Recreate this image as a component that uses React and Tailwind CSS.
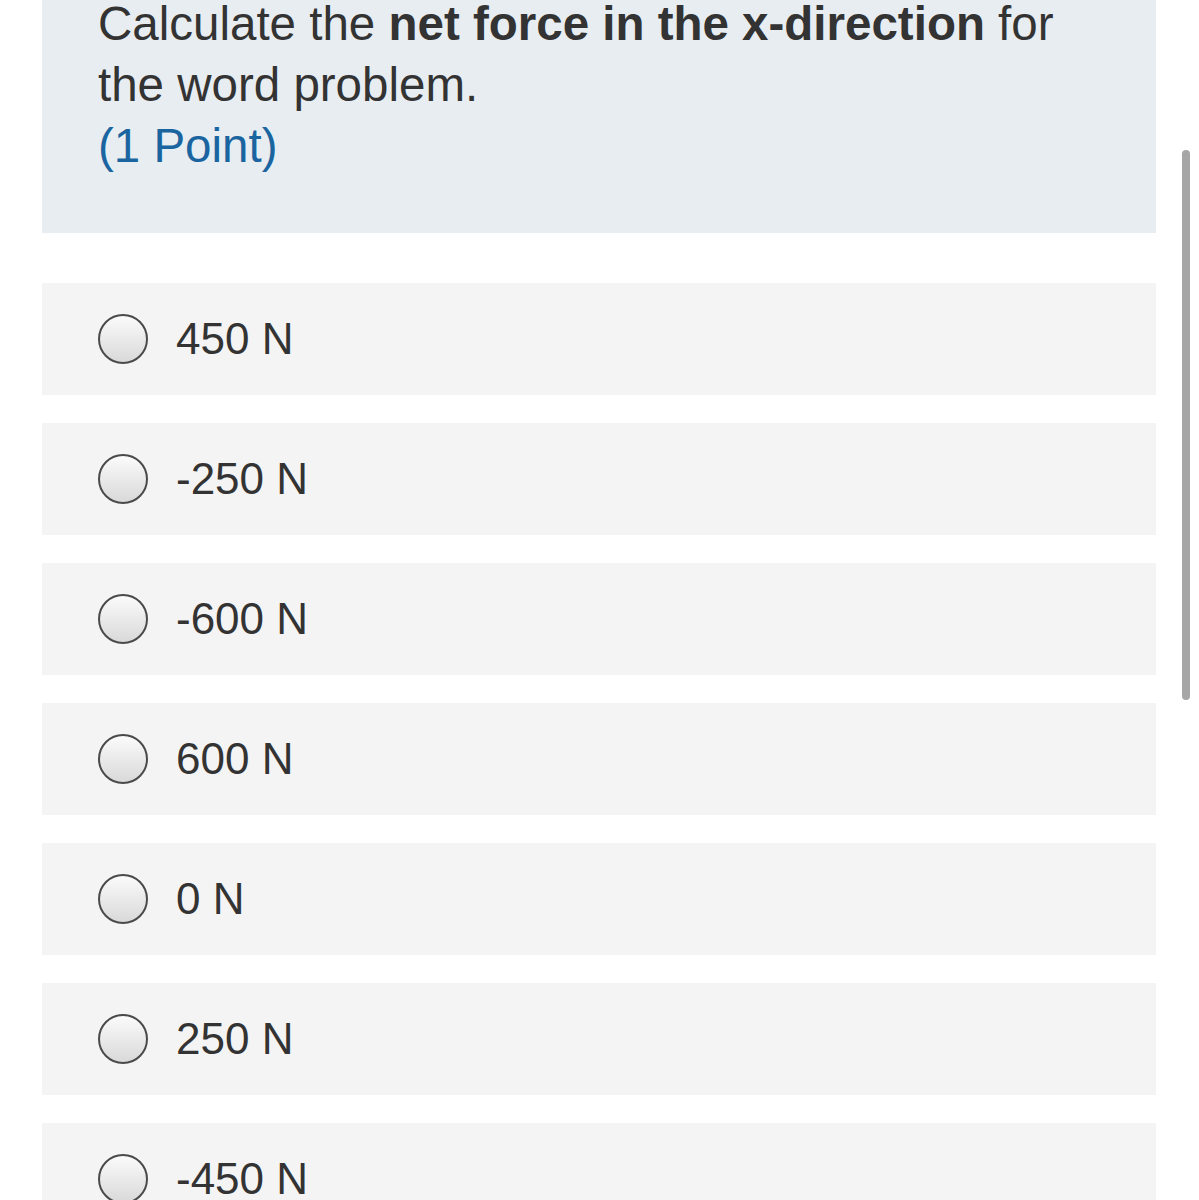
const OPTIONS = ['450 N', '-250 N', '-600 N', '600 N', '0 N', '250 N', '-450 N']

function Radio() {
  return (
    <span className="w-[50px] h-[50px] shrink-0 rounded-full border-2 border-[#4a4a4a] bg-gradient-to-b from-[#fbfbfb] to-[#d9d9d9]" />
  )
}

export default function App() {
  return (
    <div className="relative w-[1199px] h-[1200px] overflow-hidden bg-white font-['Liberation_Sans',Arial,sans-serif] text-[#333333]">
      <div className="ml-[42px] w-[1114px] h-[233px] bg-[#e8edf1] pl-[56px] pr-[80px]">
        <div className="-translate-y-[7px] text-[47.5px] leading-[61px]">
          <p>
            Calculate the <span className="font-bold">net force in the x-direction</span> for the word problem.
          </p>
          <p className="text-[#1a65a0]">(1 Point)</p>
        </div>
      </div>

      <div className="ml-[42px] w-[1114px] mt-[50px] flex flex-col gap-[28px]">
        {OPTIONS.map((o) => (
          <div key={o} className="h-[112px] shrink-0 bg-[#f4f4f4] flex items-center pl-[56px] gap-[28px]">
            <Radio />
            <span className="text-[44px] leading-none">{o}</span>
          </div>
        ))}
      </div>

      <div className="absolute left-[1182px] top-[150px] w-[8px] h-[550px] rounded-full bg-[#a6a6a6]" />
    </div>
  )
}
